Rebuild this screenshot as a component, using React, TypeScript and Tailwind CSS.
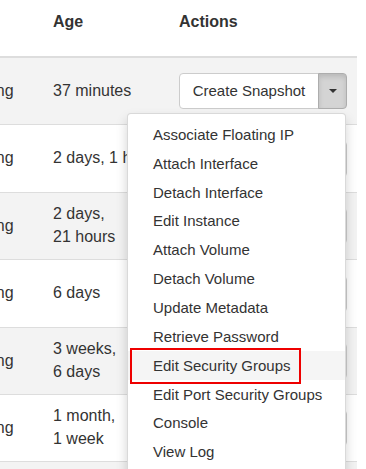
import React from "react";

// ages use non-breaking spaces between number and unit (like Django's timesince)
const rows = [
  { age: "37\u00a0minutes", striped: true, h: "h-[67px]", open: true },
  { age: "2\u00a0days, 1\u00a0hour", striped: false, h: "h-[68px]", open: false },
  { age: "2\u00a0days, 21\u00a0hours", striped: true, h: "h-[67px]", open: false },
  { age: "6\u00a0days", striped: false, h: "h-[68px]", open: false },
  { age: "3\u00a0weeks, 6\u00a0days", striped: true, h: "h-[67px]", open: false },
  { age: "1\u00a0month, 1\u00a0week", striped: false, h: "h-[67px]", open: false },
  { age: "1\u00a0month, 2\u00a0weeks", striped: true, h: "h-[67px]", open: false },
];

const menuItems = [
  "Associate Floating IP",
  "Attach Interface",
  "Detach Interface",
  "Edit Instance",
  "Attach Volume",
  "Detach Volume",
  "Update Metadata",
  "Retrieve Password",
  "Edit Security Groups",
  "Edit Port Security Groups",
  "Console",
  "View Log",
];

function ActionButton({ open }: { open: boolean }) {
  return (
    <div className="flex h-[36px]">
      <button className="w-[140px] h-full flex items-center justify-center border border-[#ccc] rounded-l-[4px] bg-white text-[15px] text-[#333]">
        Create Snapshot
      </button>
      <button
        className={
          open
            ? "w-[29px] h-full -ml-px flex items-center justify-center border border-[#adadad] rounded-r-[4px] bg-[#d4d4d4] shadow-[inset_0_3px_5px_rgba(0,0,0,0.125)]"
            : "w-[29px] h-full -ml-px flex items-center justify-center border border-[#ccc] rounded-r-[4px] bg-white"
        }
      >
        <span className="block w-0 h-0 border-t-[4px] border-t-[#333] border-x-[4px] border-x-transparent" />
      </button>
    </div>
  );
}

export default function App() {
  return (
    <div className="relative w-[366px] h-[469px] overflow-hidden bg-white text-[#333] font-['Liberation_Sans',Arial,sans-serif]">
      <div className="w-[357px] overflow-hidden">
        {/* header */}
        <div className="flex h-[58px] ml-[-54px] border-b-2 border-[#ddd] text-[16px] leading-[22.86px] font-bold pt-[11px]">
          <div className="w-[99px] px-2" />
          <div className="w-[126px] px-2">Age</div>
          <div className="pl-2">Actions</div>
        </div>

        {rows.map((r, i) => (
          <div
            key={i}
            className={`flex items-center ml-[-54px] border-b border-[#ddd] text-[16px] leading-[22.86px] ${r.h} ${
              r.striped ? "bg-[#f3f3f3]" : "bg-white"
            }`}
          >
            <div className="w-[99px] px-2 whitespace-nowrap">Running</div>
            <div className="w-[126px] px-2">
              <div className="w-[108px]">{r.age}</div>
            </div>
            <div className="pl-2">
              <ActionButton open={r.open} />
            </div>
          </div>
        ))}
      </div>

      {/* dropdown menu */}
      <div className="absolute left-[127px] top-[113px] w-[219px] h-[400px] bg-white border border-[rgba(0,0,0,0.15)] rounded-[4px] shadow-[0_6px_12px_rgba(0,0,0,0.175)] pt-[6px]">
        {menuItems.map((m) => (
          <div
            key={m}
            className={`h-[28.85px] pl-[25px] flex items-center text-[15px] leading-[21px] whitespace-nowrap text-[#333] ${
              m === "Edit Security Groups" ? "bg-[#f5f5f5]" : ""
            }`}
          >
            {m}
          </div>
        ))}
      </div>

      {/* highlight annotation */}
      <div className="absolute left-[130px] top-[348px] w-[171px] h-[36px] border-2 border-[#ee0000]" />
    </div>
  );
}
